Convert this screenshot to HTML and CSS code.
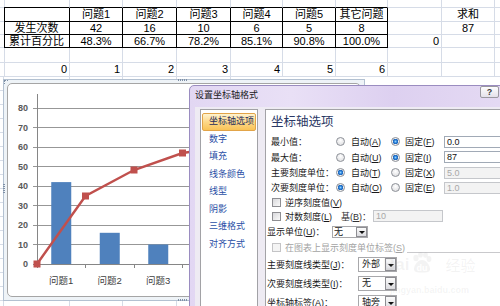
FILE: index.html
```html
<!DOCTYPE html>
<html lang="zh-CN">
<head>
  <meta charset="UTF-8">
  <meta name="viewport" content="width=device-width, initial-scale=1.0">
  <title>设置坐标轴格式</title>
  <link rel="stylesheet" href="styles.css">
</head>
<body>

<div class="sheet">
  <div></div><div class="bt"></div><div class="bt"></div><div class="bt"></div><div class="bt"></div><div class="bt"></div><div class="bt"></div><div class="bt"></div><div></div><div></div><div></div>

  <div class="bl"></div><div class="t"></div><div class="t">问题1</div><div class="t">问题2</div><div class="t">问题3</div><div class="t">问题4</div><div class="t">问题5</div><div class="t">其它问题</div><div></div><div>求和</div><div></div>

  <div class="bl"></div><div class="t">发生次数</div><div class="t">42</div><div class="t">16</div><div class="t">10</div><div class="t">6</div><div class="t">5</div><div class="t">8</div><div></div><div>87</div><div></div>

  <div class="bl"></div><div class="t">累计百分比</div><div class="t">48.3%</div><div class="t">66.7%</div><div class="t">78.2%</div><div class="t">85.1%</div><div class="t">90.8%</div><div class="t">100.0%</div><div class="num">0</div><div></div><div></div>

  <div></div><div></div><div></div><div></div><div></div><div></div><div></div><div></div><div></div><div></div><div></div>

  <div></div><div class="num">0</div><div class="num">1</div><div class="num">2</div><div class="num">3</div><div class="num">4</div><div class="num">5</div><div class="num">6</div><div></div><div></div><div></div>
</div>
<div class="sheet-rest"></div>

<!-- embedded chart, floats over the cells -->
<div class="chart">
  <span class="grip grip-top"></span>
  <span class="grip grip-bottom"></span>
  <span class="grip grip-left"></span>
  <span class="grip grip-corner"></span>
  <div class="chart-area">
    <svg class="plot" width="352" height="212" viewBox="8 84 352 212">
      <g class="grid">
        <line x1="33" y1="108" x2="360" y2="108"/>
        <line x1="33" y1="127.5" x2="360" y2="127.5"/>
        <line x1="33" y1="147" x2="360" y2="147"/>
        <line x1="33" y1="166.5" x2="360" y2="166.5"/>
        <line x1="33" y1="186" x2="360" y2="186"/>
        <line x1="33" y1="205.5" x2="360" y2="205.5"/>
        <line x1="33" y1="225" x2="360" y2="225"/>
        <line x1="33" y1="244.5" x2="360" y2="244.5"/>
      </g>
      <g class="axis">
        <line x1="37" y1="94" x2="37" y2="268"/>
        <line x1="33" y1="264" x2="360" y2="264"/>
        <line x1="85.5" y1="264" x2="85.5" y2="268"/>
        <line x1="134" y1="264" x2="134" y2="268"/>
        <line x1="182.5" y1="264" x2="182.5" y2="268"/>
        <line x1="231" y1="264" x2="231" y2="268"/>
        <line x1="279.5" y1="264" x2="279.5" y2="268"/>
        <line x1="328" y1="264" x2="328" y2="268"/>
      </g>
      <g class="bars">
        <rect x="51.25" y="182.1" width="20" height="81.9"/>
        <rect x="99.75" y="232.8" width="20" height="31.2"/>
        <rect x="148.25" y="244.5" width="20" height="19.5"/>
        <rect x="196.75" y="252.3" width="20" height="11.7"/>
        <rect x="245.25" y="254.25" width="20" height="9.75"/>
        <rect x="293.75" y="248.4" width="20" height="15.6"/>
      </g>
      <polyline class="pareto" points="37,264 85.5,196 134,170 182.5,153 231,146 279.5,140 328,134"/>
      <g class="marks">
        <rect x="33.5" y="260.5" width="7" height="7"/>
        <rect x="82" y="192.5" width="7" height="7"/>
        <rect x="130.5" y="166.5" width="7" height="7"/>
        <rect x="179" y="149.5" width="7" height="7"/>
        <rect x="227.5" y="142.5" width="7" height="7"/>
        <rect x="276" y="136.5" width="7" height="7"/>
        <rect x="324.5" y="130.5" width="7" height="7"/>
      </g>
      <g class="ylab">
        <text x="28" y="111">80</text>
        <text x="28" y="130.5">70</text>
        <text x="28" y="150">60</text>
        <text x="28" y="169.5">50</text>
        <text x="28" y="189">40</text>
        <text x="28" y="208.5">30</text>
        <text x="28" y="228">20</text>
        <text x="28" y="247.5">10</text>
        <text x="28" y="267">0</text>
      </g>
      <g class="xlab">
        <text x="61.25" y="284">问题1</text>
        <text x="109.75" y="284">问题2</text>
        <text x="158.25" y="284">问题3</text>
        <text x="206.75" y="284">问题4</text>
      </g>
    </svg>
  </div>
</div>

<!-- format axis dialog -->
<div class="dialog">
  <div class="dlg-title">
    <span class="dlg-name">设置坐标轴格式</span>
    <span class="help">?</span>
    <span class="close"></span>
  </div>
  <div class="dlg-body">
    <ul class="nav">
      <li class="on">坐标轴选项</li>
      <li>数字</li>
      <li>填充</li>
      <li>线条颜色</li>
      <li>线型</li>
      <li>阴影</li>
      <li>三维格式</li>
      <li>对齐方式</li>
    </ul>
    <div class="pane">
      <h2>坐标轴选项</h2>

      <div class="row opt-row h15">
        <span class="lbl">最小值：</span>
        <span class="radio"></span><span class="opt">自动(<u>A</u>)</span>
        <span class="radio on"></span><span class="opt">固定(<u>F</u>)</span>
        <span class="field">0.0</span>
      </div>
      <div class="row opt-row h16">
        <span class="lbl">最大值：</span>
        <span class="radio"></span><span class="opt">自动(<u>U</u>)</span>
        <span class="radio on"></span><span class="opt">固定(<u>I</u>)</span>
        <span class="field">87</span>
      </div>
      <div class="row opt-row h15">
        <span class="lbl">主要刻度单位：</span>
        <span class="radio on"></span><span class="opt">自动(<u>T</u>)</span>
        <span class="radio"></span><span class="opt">固定(<u>X</u>)</span>
        <span class="field off">5.0</span>
      </div>
      <div class="row opt-row h15">
        <span class="lbl">次要刻度单位：</span>
        <span class="radio on"></span><span class="opt">自动(<u>O</u>)</span>
        <span class="radio"></span><span class="opt">固定(<u>E</u>)</span>
        <span class="field off">1.0</span>
      </div>

      <div class="row check-row h14">
        <span class="check"></span><span class="ctext">逆序刻度值(<u>V</u>)</span>
      </div>
      <div class="row check-row h14">
        <span class="check"></span><span class="ctext log">对数刻度(<u>L</u>)</span>
        <span class="base off-text">基(<u>B</u>)：</span>
        <span class="field off base-field">10</span>
      </div>

      <div class="row plain-row h17">
        <span class="lbl unit-lbl">显示单位(<u>U</u>)：</span>
        <span class="select small"><span class="val">无</span><span class="btn"></span></span>
      </div>
      <div class="row check-row sep-row h14">
        <span class="check off"></span><span class="ctext off-text">在图表上显示刻度单位标签(<u>S</u>)</span>
        <span class="sep"></span>
      </div>

      <div class="row plain-row tick-row">
        <span class="lbl tick-lbl">主要刻度线类型(<u>J</u>)：</span>
        <span class="select"><span class="val">外部</span><span class="btn"></span></span>
      </div>
      <div class="row plain-row tick-row">
        <span class="lbl tick-lbl">次要刻度线类型(<u>I</u>)：</span>
        <span class="select"><span class="val">无</span><span class="btn"></span></span>
      </div>
      <div class="row plain-row tick-row">
        <span class="lbl tick-lbl">坐标轴标签(<u>A</u>)：</span>
        <span class="select"><span class="val">轴旁</span><span class="btn"></span></span>
      </div>
    </div>
  </div>
</div>

<!-- site watermark -->
<div class="watermark">
  <div class="wm-top">
    <span class="wm-bai">Bai</span>
    <svg class="paw" width="22" height="21" viewBox="0 0 22 21">
      <ellipse cx="5" cy="6" rx="2.6" ry="3.2"/>
      <ellipse cx="9.5" cy="2.8" rx="2.4" ry="2.8"/>
      <ellipse cx="14.5" cy="3" rx="2.4" ry="2.8"/>
      <ellipse cx="18" cy="7" rx="2.4" ry="3"/>
      <path d="M11 8c-4 0-8 5-8 9 0 3 3 3.5 8 3.5s8-.5 8-3.5c0-4-4-9-8-9z"/>
      <text x="11" y="18.5">du</text>
    </svg>
    <span class="wm-jy">经验</span>
  </div>
  <div class="wm-url">jingyan.baidu.com</div>
</div>

</body>
</html>
```

FILE: styles.css
```css
* {
  box-sizing: border-box;
}

body {
  margin: 0;
  width: 500px;
  height: 306px;
  overflow: hidden;
  position: relative;
  background: #fff;
  font-family: "Liberation Sans", "Noto Sans CJK SC", sans-serif;
  font-size: 11px;
  color: #000;
}

/* spreadsheet cells */
.sheet {
  display: grid;
  grid-template-columns: 4px 66px 53px 54px 54px 52px 53px 52px 54px 53px 20px;
  grid-template-rows: 8px 14px 13px 13px 15px 14px;
  width: 515px;
}

.sheet > div {
  display: flex;
  align-items: center;
  justify-content: center;
  padding: 0 2px;
  border-right: 1px solid #d6dce7;
  border-bottom: 1px solid #d6dce7;
  line-height: 11px;
  white-space: nowrap;
  overflow: hidden;
}

.sheet > .num {
  justify-content: flex-end;
}

.sheet > .t {
  border-right-color: #000;
  border-bottom-color: #000;
}

.sheet > .bl {
  border-right-color: #000;
}

.sheet > .bt {
  border-bottom-color: #000;
}

.sheet-rest {
  height: 229px;
  background-image:
    repeating-linear-gradient(180deg, transparent 0 13px, #d6dce7 13px 14px),
    linear-gradient(90deg, transparent 0 3px, #d6dce7 3px 4px, transparent 4px 69px, #d6dce7 69px 70px,
      transparent 70px 122px, #d6dce7 122px 123px, transparent 123px 176px, #d6dce7 176px 177px,
      transparent 177px 230px, #d6dce7 230px 231px, transparent 231px);
}

/* chart object */
.chart {
  position: absolute;
  left: 3px;
  top: 79px;
  width: 362px;
  height: 222px;
  padding: 3px;
  border: 1px solid #b3c1d1;
  background: #eef3f7;
}

.chart-area {
  height: 100%;
  border: 1px solid #a5a5a5;
  border-radius: 5px;
  background: #fff;
  overflow: hidden;
}

.plot {
  display: block;
}

.grip {
  position: absolute;
  background: repeating-linear-gradient(90deg, #7f90a6 0 1px, transparent 1px 2px);
}

.grip-top {
  left: 174px;
  top: -1px;
  width: 10px;
  height: 2px;
}

.grip-bottom {
  left: 174px;
  bottom: -1px;
  width: 10px;
  height: 2px;
}

.grip-left {
  left: -1px;
  top: 104px;
  width: 2px;
  height: 10px;
  background: repeating-linear-gradient(180deg, #7f90a6 0 1px, transparent 1px 2px);
}

.grip-corner {
  left: 0;
  top: 0;
  width: 4px;
  height: 4px;
  border-left: 1px dotted #7f90a6;
  border-top: 1px dotted #7f90a6;
  background: none;
}

.grid line {
  stroke: #979797;
  stroke-width: 1;
  shape-rendering: crispEdges;
}

.axis line {
  stroke: #868686;
  stroke-width: 1;
  shape-rendering: crispEdges;
}

.bars rect {
  fill: #4f81bd;
}

.pareto {
  fill: none;
  stroke: #c0504d;
  stroke-width: 2.4;
}

.marks rect {
  fill: #c0504d;
}

.ylab text {
  font-family: "Liberation Sans", sans-serif;
  font-size: 9px;
  font-weight: bold;
  fill: #595959;
  text-anchor: end;
}

.xlab text {
  font-family: "Liberation Sans", "Noto Sans CJK SC", sans-serif;
  font-size: 9.5px;
  fill: #404040;
  text-anchor: middle;
}

/* dialog window */
.dialog {
  position: absolute;
  left: 189px;
  top: 85px;
  width: 340px;
  height: 230px;
  border: 1px solid #9a8cc0;
  border-radius: 5px 5px 0 0;
  background: linear-gradient(90deg, #e2d7f3, #e9e0f6 30%, #ddd0f0 60%, #e6dcf4);
  font-size: 9px;
}

.dlg-title {
  display: flex;
  align-items: flex-start;
  height: 21px;
  padding-left: 5px;
  line-height: 19px;
  color: #1b1b1b;
}

.dlg-name {
  flex: 1;
}

.help {
  width: 19px;
  height: 12px;
  margin-right: 2px;
  border: 1px solid #9a98a0;
  border-radius: 2px;
  background: linear-gradient(#fdfdfd, #e4e1ea);
  font-size: 9px;
  font-weight: bold;
  line-height: 10px;
  text-align: center;
  color: #3a3a3a;
}

.close {
  width: 27px;
}

.dlg-body {
  display: flex;
  gap: 7px;
  height: 100%;
  margin-left: 5px;
  padding: 2px 0 0 5px;
  background: #eeebf3;
}

.nav {
  width: 58px;
  margin: 0;
  padding: 3px 1px;
  list-style: none;
  border: 1px solid #a2a2a6;
  background: #fff;
}

.nav li {
  height: 17.5px;
  padding-left: 7px;
  line-height: 17.5px;
  color: #2a4fa6;
  white-space: nowrap;
}

.nav li.on {
  padding-left: 6px;
  border: 1px solid #e2a449;
  border-radius: 2px;
  background: linear-gradient(#fff3cf, #fdd889 50%, #f9c357);
  line-height: 15.5px;
  color: #1d2d5c;
}

.pane {
  flex: 1;
  border: 1px solid #a3a3a7;
  background: #fff;
  color: #1a1a1a;
}

.pane h2 {
  margin: 0;
  height: 24px;
  padding-left: 5px;
  font-size: 12.5px;
  font-weight: normal;
  line-height: 24px;
  color: #2b3865;
}

.row {
  display: flex;
  align-items: center;
  white-space: nowrap;
}

.h14 { height: 14px; }
.h15 { height: 15px; }
.h16 { height: 16px; }
.h17 { height: 17px; }

.opt-row {
  padding-left: 5px;
}

.check-row {
  padding-left: 6px;
}

.plain-row {
  padding-left: 1px;
}

u {
  text-decoration: underline;
  text-underline-offset: 1px;
}

.lbl {
  width: 65px;
  flex: none;
}

.tick-lbl {
  width: 91px;
}

.opt {
  width: 40px;
  margin-left: 6px;
}

.radio + .opt + .radio + .opt {
  width: 39px;
  margin-left: 5px;
}

.radio {
  flex: none;
  width: 9px;
  height: 9px;
  border: 1px solid #8c9097;
  border-radius: 50%;
  background: radial-gradient(circle at 50% 35%, #fff, #d9d9dc);
}

.radio.on {
  background: radial-gradient(circle, #8fd3ff 0, #2a7fd6 1.5px, #1b5fb5 2.6px, #f4f4f4 3px, #d4d4d8);
}

.field {
  flex: 1;
  height: 12px;
  padding-left: 2px;
  border: 1px solid #a1aab6;
  background: #fff;
  font-family: "Liberation Sans", sans-serif;
  font-size: 9px;
  line-height: 10px;
  color: #111;
}

.field.off {
  border-color: #c5c7cb;
  background: #f3f3f3;
  color: #a8a8a8;
}

.check {
  flex: none;
  width: 9px;
  height: 9px;
  border: 1px solid #8e8e92;
  background: linear-gradient(135deg, #d8d8db, #fafafa);
}

.check.off {
  border-color: #c4c4c6;
  background: #f4f4f4;
}

.ctext {
  margin-left: 4px;
}

.ctext.log {
  width: 56px;
}

.off-text {
  color: #a3a3a3;
}

.base {
  width: 32px;
  color: #333;
}

.base-field {
  flex: none;
  width: 70px;
}

.sep {
  flex: 1;
  align-self: flex-end;
  margin-left: 2px;
  margin-bottom: 1px;
  border-bottom: 1px solid #c9c9cc;
}

.tick-row {
  height: 17px;
  margin-top: 2px;
}

.select {
  display: flex;
  flex: none;
  width: 39px;
  height: 15px;
  border: 1px solid #a8a8ab;
  background: #fff;
}

.select.small {
  width: 36px;
  height: 12px;
}

.select .val {
  flex: 1;
  padding-left: 3px;
  line-height: 13px;
}

.select.small .val {
  padding-left: 1px;
  line-height: 10px;
}

.select .btn {
  position: relative;
  width: 11px;
  margin: 0 0 0 1px;
  border: 1px solid #8d8d92;
  background: linear-gradient(#fbfbfb, #dcdce0);
}

.select .btn::after {
  content: "";
  position: absolute;
  left: 2px;
  top: 50%;
  margin-top: -1px;
  border-top: 3px solid #111;
  border-left: 3px solid transparent;
  border-right: 3px solid transparent;
}

/* watermark */
.watermark {
  position: absolute;
  left: 383px;
  top: 252px;
  color: rgba(160, 160, 160, 0.13);
  pointer-events: none;
}

.wm-top {
  display: flex;
  align-items: flex-end;
  gap: 2px;
}

.wm-bai {
  font-family: "Liberation Sans", sans-serif;
  font-size: 17px;
  font-weight: bold;
  line-height: 17px;
}

.paw {
  fill: rgba(160, 160, 160, 0.13);
}

.paw text {
  font-family: "Liberation Sans", sans-serif;
  font-size: 9px;
  font-weight: bold;
  fill: #fff;
  text-anchor: middle;
}

.wm-jy {
  margin-left: 10px;
  font-family: "Noto Sans CJK SC", sans-serif;
  font-size: 15px;
  line-height: 17px;
}

.wm-url {
  margin: 12px 0 0 7px;
  font-family: "Liberation Sans", sans-serif;
  font-size: 9px;
  font-weight: bold;
}
```
